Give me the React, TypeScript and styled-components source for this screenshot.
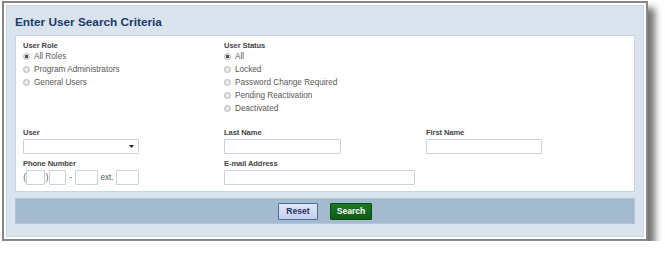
import styled, { createGlobalStyle } from "styled-components";

const GlobalStyle = createGlobalStyle`
  html, body {
    margin: 0;
    padding: 0;
    background: #ffffff;
  }
  body {
    font-family: "Liberation Sans", Arial, sans-serif;
  }
`;

const roles = ["All Roles", "Program Administrators", "General Users"];
const statuses = [
  "All",
  "Locked",
  "Password Change Required",
  "Pending Reactivation",
  "Deactivated",
];

const App = () => {
  return (
    <>
      <GlobalStyle />
      <Frame>
        <Panel>
          <Title>Enter User Search Criteria</Title>

          <Criteria>
            <Grid>
              <Column>
                <Label>User Role</Label>
                {roles.map((r, i) => (
                  <RadioRow key={r}>
                    <Radio $checked={i === 0} />
                    {r}
                  </RadioRow>
                ))}
              </Column>
              <Column>
                <Label>User Status</Label>
                {statuses.map((s, i) => (
                  <RadioRow key={s}>
                    <Radio $checked={i === 0} />
                    {s}
                  </RadioRow>
                ))}
              </Column>
              <Column />
            </Grid>

            <FieldGrid>
              <Field>
                <Label>User</Label>
                <Select>
                  <svg width="5" height="3" viewBox="0 0 5 3">
                    <path d="M0 0h5L2.5 3z" fill="#222" />
                  </svg>
                </Select>
              </Field>
              <Field>
                <Label>Last Name</Label>
                <Input $w={117} />
              </Field>
              <Field>
                <Label>First Name</Label>
                <Input $w={116} />
              </Field>

              <Field>
                <Label>Phone Number</Label>
                <PhoneRow>
                  <Sep $w={3}>(</Sep>
                  <Input $w={19} />
                  <Sep $w={4}>)</Sep>
                  <Input $w={17} />
                  <Sep $w={9}>-</Sep>
                  <Input $w={23} />
                  <Sep $w={18}>ext.</Sep>
                  <Input $w={23} />
                </PhoneRow>
              </Field>
              <Field>
                <Label>E-mail Address</Label>
                <Input $w={191} />
              </Field>
            </FieldGrid>
          </Criteria>

          <ButtonBar>
            <ResetButton>Reset</ResetButton>
            <SearchButton>Search</SearchButton>
          </ButtonBar>
        </Panel>
      </Frame>
    </>
  );
};

export default App;

const Frame = styled.div`
  margin: 1px 0 0 2px;
  width: 646px;
  box-sizing: border-box;
  border: 2px solid #858585;
  padding: 2px;
  background: #ffffff;
  box-shadow: 7px 7px 7px rgba(0, 0, 0, 0.55);
`;

const Panel = styled.div`
  background: #d9e4ee;
  border: 1px solid #c9d8e5;
  padding: 9px 8px 12px 8px;
  display: flex;
  flex-direction: column;
`;

const Title = styled.h1`
  margin: 0 0 6px;
  font-size: 11.8px;
  line-height: 14px;
  font-weight: bold;
  color: #1a3a6b;
`;

const Criteria = styled.div`
  background: #ffffff;
  border: 1px solid #c8d6e3;
  padding: 6px 7px 6px 7px;
  display: flex;
  flex-direction: column;
  gap: 14px;
`;

const Grid = styled.div`
  display: grid;
  grid-template-columns: 201px 202px 1fr;
`;

const Column = styled.div`
  display: flex;
  flex-direction: column;
`;

const Label = styled.div`
  font-size: 7.6px;
  line-height: 8px;
  font-weight: bold;
  color: #454545;
  letter-spacing: -0.1px;
`;

const RadioRow = styled.div`
  height: 13px;
  display: flex;
  align-items: center;
  gap: 4px;
  font-size: 8.2px;
  color: #585858;
`;

const Radio = styled.span<{ $checked?: boolean }>`
  width: 7px;
  height: 7px;
  box-sizing: border-box;
  border-radius: 50%;
  border: 1px solid #b8b8b8;
  background: ${(p) =>
    p.$checked
      ? "radial-gradient(circle, #505050 0 1.4px, #e4e4e4 2px)"
      : "radial-gradient(circle, #f2f2f2 0, #d8d8d8 100%)"};
  flex-shrink: 0;
`;

const FieldGrid = styled.div`
  display: grid;
  grid-template-columns: 201px 202px 1fr;
  row-gap: 6px;
`;

const Field = styled.div`
  display: flex;
  flex-direction: column;
  gap: 2px;
  align-items: flex-start;
`;

const Input = styled.div<{ $w: number }>`
  width: ${(p) => p.$w}px;
  height: 15px;
  box-sizing: border-box;
  border: 1px solid #c6d3df;
  border-radius: 1px;
  background: #ffffff;
`;

const Select = styled.div`
  width: 116px;
  height: 15px;
  box-sizing: border-box;
  border: 1px solid #c6d3df;
  border-radius: 1px;
  background: #ffffff;
  display: flex;
  align-items: center;
  justify-content: flex-end;
  padding-right: 4px;
`;

const PhoneRow = styled.div`
  display: flex;
  align-items: center;
`;

const Sep = styled.span<{ $w: number }>`
  width: ${(p) => p.$w}px;
  text-align: center;
  font-size: 8.2px;
  color: #585858;
`;

const ButtonBar = styled.div`
  margin-top: 6px;
  height: 26px;
  box-sizing: border-box;
  background: #a4bacf;
  border: 1px solid #b3c6d8;
  display: flex;
  align-items: center;
  justify-content: center;
  gap: 12px;
`;

const ButtonBase = styled.button`
  height: 17px;
  box-sizing: border-box;
  padding: 0;
  font-family: "Liberation Sans", Arial, sans-serif;
  font-size: 8.6px;
  font-weight: bold;
  border-radius: 1px;
  cursor: pointer;
`;

const ResetButton = styled(ButtonBase)`
  width: 40px;
  color: #1d3360;
  background: linear-gradient(#e1e6f8, #c5cff0);
  border: 1px solid #4b6b9c;
`;

const SearchButton = styled(ButtonBase)`
  width: 42px;
  color: #ffffff;
  background: linear-gradient(#1b7a22, #0f5a15);
  border: 1px solid #0b4a10;
`;
